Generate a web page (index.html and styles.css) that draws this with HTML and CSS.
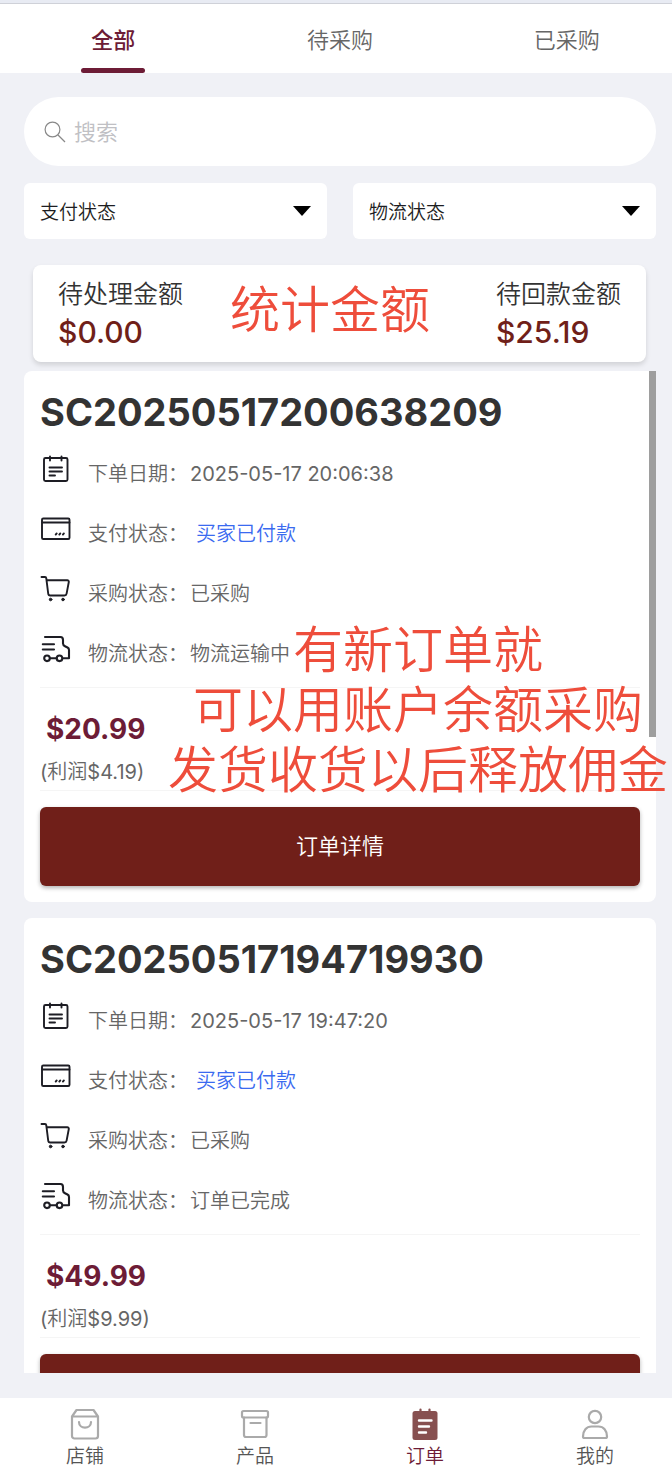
FILE: index.html
```html
<!DOCTYPE html>
<html lang="zh-CN">
<head>
<meta charset="utf-8">
<meta name="viewport" content="width=device-width, initial-scale=1">
<title>订单</title>
<link rel="stylesheet" href="styles.css">
</head>
<body>
<svg class="defs" aria-hidden="true">
  <symbol id="i-date" viewBox="0 0 32 32" fill="none" stroke="currentColor" stroke-width="1.9" stroke-linecap="round" stroke-linejoin="round">
    <rect x="4" y="5" width="23.500" height="23" rx="1.500"/><path d="M10 3.500v4M21.500 3.500v4M9.500 14.500h12.500M9.500 18.500h12.500M9.500 22.500h5.500"/>
  </symbol>
  <symbol id="i-card" viewBox="0 0 32 32" fill="none" stroke="currentColor" stroke-width="1.900" stroke-linecap="round" stroke-linejoin="round">
    <rect x="2" y="5.500" width="27.500" height="20.500" rx="1.300"/><path d="M2.500 9.500h27M15.700 21.600l1-1.200M19.300 21.600l1-1.200M22.900 21.600l1-1.200"/>
  </symbol>
  <symbol id="i-cart" viewBox="0 0 32 32" fill="none" stroke="currentColor" stroke-width="1.900" stroke-linecap="round" stroke-linejoin="round">
    <path d="M1.500 4H5c.8 0 1.200.5 1.300 1.300L8.200 20.500c.1 1.300.8 2 2 2H24.500c1.200 0 1.900-.6 2.100-1.800L28.800 9c.2-1-.4-1.700-1.500-1.700H7"/><circle cx="10.600" cy="26.500" r="1.300" fill="currentColor" stroke-width="1"/><circle cx="23" cy="26.500" r="1.300" fill="currentColor" stroke-width="1"/>
  </symbol>
  <symbol id="i-truck" viewBox="0 0 32 32" fill="none" stroke="currentColor" stroke-width="2.100" stroke-linecap="round" stroke-linejoin="round">
    <path d="M5 4H20.500C22.500 4 23 5 23 7v3.500c0 1.300.6 2 2 2.700l2.500 1.300c1.200.6 1.500 1.300 1.500 2.500V25.300H23.500M2.800 11.300H14M2.800 16.500H14M10 25.300h6.500"/><circle cx="7" cy="25.300" r="2.800"/><circle cx="19.500" cy="25.300" r="2.800"/>
  </symbol>
</svg>

<div class="page">
  <nav class="tabs" aria-label="订单筛选">
    <button class="tab tab-active" type="button">全部</button>
    <button class="tab" type="button">待采购</button>
    <button class="tab" type="button">已采购</button>
  </nav>

  <main class="content">
    <label class="search">
      <svg class="search-icon" viewBox="0 0 22 22" fill="none" stroke="currentColor" stroke-width="1.200" aria-hidden="true"><circle cx="8.500" cy="8.500" r="7.400"/><path d="M14 14l7 7"/></svg>
      <input class="search-input" type="search" placeholder="搜索" aria-label="搜索">
    </label>

    <div class="filters">
      <div class="filter">
        <select class="select" aria-label="支付状态"><option>支付状态</option></select>
        <svg class="arrow" viewBox="0 0 18 10" aria-hidden="true"><path d="M0 0h18l-9 10z"/></svg>
      </div>
      <div class="filter">
        <select class="select" aria-label="物流状态"><option>物流状态</option></select>
        <svg class="arrow" viewBox="0 0 18 10" aria-hidden="true"><path d="M0 0h18l-9 10z"/></svg>
      </div>
    </div>

    <section class="stats">
      <div class="stat"><span class="stat-label">待处理金额</span><strong class="stat-value">$0.00</strong></div>
      <div class="stat"><span class="stat-label">待回款金额</span><strong class="stat-value">$25.19</strong></div>
      <p class="note note-stats">统计金额</p>
    </section>

    <div class="viewport">
      <div class="orders">
        <article class="order">
          <h2 class="order-no">SC20250517200638209</h2>
          <ul class="details">
            <li class="detail"><svg class="detail-icon"><use href="#i-date"/></svg><span>下单日期：<span class="value">2025-05-17 20:06:38</span></span></li>
            <li class="detail"><svg class="detail-icon"><use href="#i-card"/></svg><span>支付状态：<span class="paid">买家已付款</span></span></li>
            <li class="detail"><svg class="detail-icon"><use href="#i-cart"/></svg><span>采购状态：<span class="value">已采购</span></span></li>
            <li class="detail"><svg class="detail-icon"><use href="#i-truck"/></svg><span>物流状态：<span class="value">物流运输中</span></span></li>
          </ul>
          <div class="amount"><strong class="price">$20.99</strong><span class="profit">(利润$4.19)</span></div>
          <button class="more" type="button">订单详情</button>
        </article>
        <article class="order">
          <h2 class="order-no">SC20250517194719930</h2>
          <ul class="details">
            <li class="detail"><svg class="detail-icon"><use href="#i-date"/></svg><span>下单日期：<span class="value">2025-05-17 19:47:20</span></span></li>
            <li class="detail"><svg class="detail-icon"><use href="#i-card"/></svg><span>支付状态：<span class="paid">买家已付款</span></span></li>
            <li class="detail"><svg class="detail-icon"><use href="#i-cart"/></svg><span>采购状态：<span class="value">已采购</span></span></li>
            <li class="detail"><svg class="detail-icon"><use href="#i-truck"/></svg><span>物流状态：<span class="value">订单已完成</span></span></li>
          </ul>
          <div class="amount"><strong class="price">$49.99</strong><span class="profit">(利润$9.99)</span></div>
          <button class="more" type="button" aria-label="订单详情"></button>
        </article>
      </div>
      <div class="thumb"></div>
      <p class="note note-orders">有新订单就<br>可以用账户余额采购<br>发货收货以后释放佣金</p>
    </div>
  </main>

  <nav class="bottom" aria-label="主导航">
    <a class="item" href="#shop">
      <svg class="item-icon" viewBox="0 0 32 32" fill="none" stroke="currentColor" stroke-width="2.200" stroke-linejoin="round" stroke-linecap="round"><path d="M3 8.500L7.500 2h17L29 8.500V28a2.500 2.500 0 0 1-2.500 2.500h-21A2.500 2.500 0 0 1 3 28zM3 8.500h26M10 14c0 7.500 12 7.500 12 0"/></svg>
      <span>店铺</span>
    </a>
    <a class="item" href="#products">
      <svg class="item-icon" viewBox="0 0 32 32" fill="none" stroke="currentColor" stroke-width="2.200" stroke-linejoin="round" stroke-linecap="round"><rect x="3" y="3" width="26" height="6.500" rx="1.500"/><path d="M5 9.500V27a2 2 0 0 0 2 2h18.500a2 2 0 0 0 2-2V9.500M11.500 15h10"/></svg>
      <span>产品</span>
    </a>
    <a class="item item-active" href="#orders">
      <svg class="item-icon" viewBox="0 0 32 32" fill="none" stroke-linecap="round"><rect x="3.500" y="3" width="25" height="29" rx="2.500" fill="currentColor"/><path d="M11.500 1.500v3M20.500 1.500v3" stroke="currentColor" stroke-width="2.200"/><path d="M10 12.500h12.500M10 18.500h10M10 24.500h7" stroke="#fff" stroke-width="2.400"/></svg>
      <span>订单</span>
    </a>
    <a class="item" href="#mine">
      <svg class="item-icon" viewBox="0 0 32 32" fill="none" stroke="currentColor" stroke-width="2.200" stroke-linejoin="round"><circle cx="16" cy="9" r="6.200"/><path d="M4 28.500c0-6 3.500-10 8.500-10h7c5 0 8.500 4 8.500 10 0 1-.6 1.500-1.500 1.500h-21C4.600 30 4 29.500 4 28.500z"/></svg>
      <span>我的</span>
    </a>
  </nav>
</div>
</body>
</html>
```

FILE: styles.css
```css
* { box-sizing: border-box; }

body {
  margin: 0;
  background: #f0f1f6;
  color: #333;
  font-family: Inter, "Noto Sans CJK SC DemiLight", "Noto Sans CJK SC", sans-serif;
}

button, input, select { font: inherit; color: inherit; border: 0; margin: 0; }
h2, p, ul { margin: 0; padding: 0; }
.defs { display: none; }

.page {
  display: flex;
  flex-direction: column;
  height: 100vh;
  overflow: hidden;
  border-top: 3px solid #e8ebf3;
}

.tabs {
  display: grid;
  grid-template-columns: repeat(3, 1fr);
  flex: none;
  height: 70px;
  margin-right: -8px;
  background: #fff;
  border-top: 1px solid #cfd1d8;
}

.tab {
  position: relative;
  padding: 0 0 2px;
  background: none;
  color: #666;
  font-size: 22px;
}

.tab-active {
  color: #6d1c36;
  font-family: Inter, "Noto Sans CJK SC", sans-serif;
  font-weight: 500;
}

.tab-active::after {
  content: "";
  position: absolute;
  bottom: 0;
  left: 50%;
  width: 64px;
  height: 5px;
  margin-left: -32px;
  border-radius: 3px;
  background: #6d1c36;
}

.content {
  display: flex;
  flex-direction: column;
  flex: 1;
  min-height: 0;
  padding: 24px 16px 25px 24px;
}

.search {
  display: flex;
  align-items: center;
  gap: 8px;
  flex: none;
  height: 69px;
  padding: 0 20px;
  border-radius: 35px;
  background: #fff;
}

.search-icon { width: 22px; height: 22px; color: #888; }

.search-input {
  flex: 1;
  min-width: 0;
  padding: 0;
  outline: 0;
  background: none;
  font-size: 22px;
}

.search-input::placeholder { color: #c0c0c4; }

.filters {
  display: grid;
  grid-template-columns: 1fr 1fr;
  gap: 26px;
  margin-top: 17px;
}

.filter { position: relative; }

.select {
  display: block;
  width: 100%;
  height: 56px;
  padding: 2px 16px 0;
  appearance: none;
  border-radius: 6px;
  background: #fff;
  color: #1d1d22;
  font-size: 19px;
}

.arrow {
  position: absolute;
  top: 23px;
  right: 16px;
  width: 18px;
  height: 10px;
  pointer-events: none;
}

.stats {
  position: relative;
  display: flex;
  justify-content: space-between;
  align-items: center;
  flex: none;
  height: 97px;
  margin: 26px 10px 9px 9px;
  padding: 0 25px 2px;
  border-radius: 8px;
  background: #fff;
  box-shadow: 0 3px 5px rgba(0, 0, 0, 0.13);
}

.stat { display: flex; flex-direction: column; }
.stat-label { font-size: 25px; line-height: 38px; }
.stat-value { color: #701f19; font-size: 30px; font-weight: 500; line-height: 38px; }

.note {
  position: absolute;
  color: #ee4d3b;
  font-size: 50px;
  line-height: 60px;
  text-align: center;
  white-space: nowrap;
}

.note-stats { top: 15px; left: 197px; }
.note-orders { top: 249px; right: -12px; }

.viewport { position: relative; flex: 1; min-height: 0; }

.orders {
  display: flex;
  flex-direction: column;
  gap: 16px;
  height: 100%;
  overflow-y: auto;
  scrollbar-width: none;
}

.thumb {
  position: absolute;
  top: 0;
  right: 0;
  width: 7px;
  height: 366px;
  background: #9e9e9e;
}

.order { flex: none; padding: 16px; border-radius: 8px; background: #fff; }
.order-no { margin-bottom: 6px; font-size: 38px; font-weight: 700; line-height: 50px; }

.details { padding-bottom: 4px; border-bottom: 1px solid #f5f5f5; list-style: none; }

.detail {
  display: flex;
  align-items: center;
  gap: 16px;
  height: 60px;
  padding-bottom: 2px;
  color: #666;
  font-size: 20px;
}

.detail-icon { width: 32px; height: 32px; margin-bottom: 6px; color: #1d1d24; }
.value { margin-left: 2px; }
.paid { margin-left: 8px; color: #3a6af0; }

.amount {
  display: flex;
  flex-direction: column;
  padding-top: 16px;
  border-bottom: 1px solid #f5f5f5;
}

.price { padding-left: 6px; color: #6d1c36; font-size: 28px; font-weight: 700; line-height: 50px; }
.profit { color: #666; font-size: 20px; line-height: 36px; }

.more {
  display: block;
  width: 100%;
  height: 79px;
  margin-top: 16px;
  padding: 0 0 5px;
  border-radius: 6px;
  background: #701f19;
  color: #fff;
  box-shadow: 0 2px 4px rgba(0, 0, 0, 0.3);
  font-size: 22px;
}

.bottom {
  display: grid;
  grid-template-columns: repeat(4, 1fr);
  flex: none;
  height: 72px;
  margin-right: -8px;
  background: #fff;
}

.item {
  display: flex;
  flex-direction: column;
  align-items: center;
  gap: 4px;
  padding-top: 10px;
  color: #555;
  font-size: 19px;
  line-height: 26px;
  text-decoration: none;
}

.item-icon { width: 32px; height: 32px; color: #aaa; }
.item-active { color: #6d1c36; }
.item-active .item-icon { color: #875050; }
```
